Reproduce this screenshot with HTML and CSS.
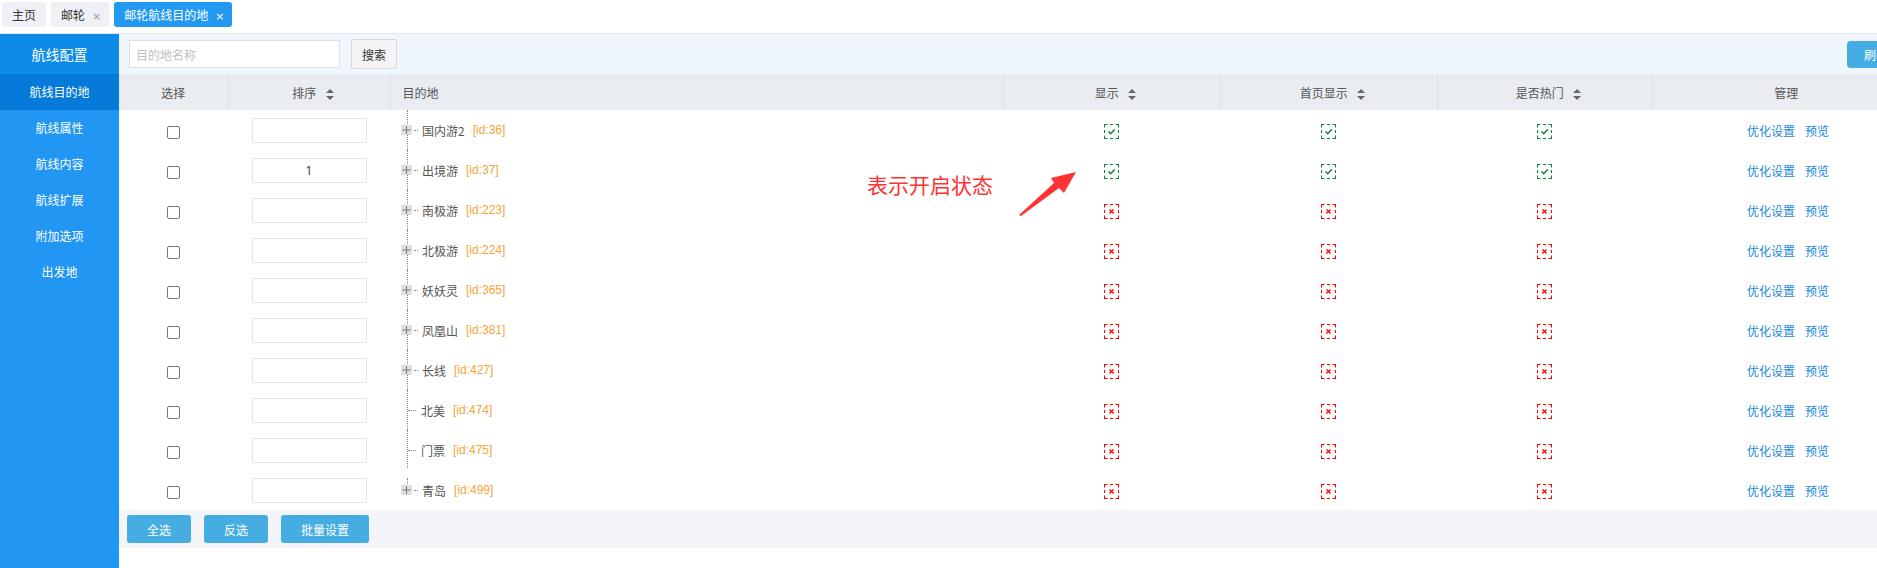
FILE: index.html
```html
<!DOCTYPE html>
<html lang="zh-CN">
<head>
    <meta charset="UTF-8">
    <title>邮轮航线目的地</title>
    <link rel="stylesheet" href="styles.css">
</head>
<body>
    <div class="tabs">
        <div class="tab">主页</div>
        <div class="tab closable">邮轮<span class="close">×</span></div>
        <div class="tab closable active">邮轮航线目的地<span class="close">×</span></div>
    </div>

    <div class="layout">
        <div class="side">
            <div class="side-title">航线配置</div>
            <div class="side-item current">航线目的地</div>
            <div class="side-item">航线属性</div>
            <div class="side-item">航线内容</div>
            <div class="side-item">航线扩展</div>
            <div class="side-item">附加选项</div>
            <div class="side-item">出发地</div>
        </div>

        <div class="main">
            <div class="toolbar">
                <input type="text" class="search-input" placeholder="目的地名称">
                <button class="search-btn">搜索</button>
                <button class="refresh-btn">刷新</button>
            </div>

            <table class="list">
                <colgroup>
                    <col style="width:109px">
                    <col style="width:162px">
                    <col style="width:613px">
                    <col style="width:217px">
                    <col style="width:217px">
                    <col style="width:215px">
                    <col>
                </colgroup>
                <thead>
                    <tr>
                        <th>选择</th>
                        <th>排序 <span class="sort"></span></th>
                        <th class="left">目的地</th>
                        <th>显示 <span class="sort"></span></th>
                        <th>首页显示 <span class="sort"></span></th>
                        <th>是否热门 <span class="sort"></span></th>
                        <th>管理</th>
                    </tr>
                </thead>
                <tbody id="rows"></tbody>
            </table>

            <div class="footer">
                <button class="btn">全选</button>
                <button class="btn">反选</button>
                <button class="btn wide">批量设置</button>
            </div>

            <div class="note">表示开启状态</div>
            <svg class="note-arrow" width="70" height="56" viewBox="0 0 70 56">
                <polygon points="9,50 44,18 41,13 66,7 54,28 49,23 11,51" fill="#f33"/>
            </svg>
        </div>
    </div>

    <script>
        const items = [
            { name: "国内游2", id: 36, sort: "", on: true, type: "folder" },
            { name: "出境游", id: 37, sort: "1", on: true, type: "folder" },
            { name: "南极游", id: 223, sort: "", on: false, type: "folder" },
            { name: "北极游", id: 224, sort: "", on: false, type: "folder" },
            { name: "妖妖灵", id: 365, sort: "", on: false, type: "folder" },
            { name: "凤凰山", id: 381, sort: "", on: false, type: "folder" },
            { name: "长线", id: 427, sort: "", on: false, type: "folder" },
            { name: "北美", id: 474, sort: "", on: false, type: "leaf" },
            { name: "门票", id: 475, sort: "", on: false, type: "leaf end" },
            { name: "青岛", id: 499, sort: "", on: false, type: "folder last" }
        ];

        const box = "M0.5 3.5V0.5H3.5M6 0.5H9M11.5 0.5H14.5V3.5M14.5 6V9M14.5 11.5V14.5H11.5M9 14.5H6M3.5 14.5H0.5V11.5M0.5 9V6";

        function statusIcon(on) {
            const color = on ? "#17803d" : "#f00";
            const mark = on
                ? '<path d="M4.5 7.5L6.7 9.7L10.7 5.5" stroke-width="1.6"/>'
                : '<path d="M5.5 5.5L9.5 9.5M9.5 5.5L5.5 9.5" stroke-width="1.4"/>';
            return `<svg class="status" width="15" height="15" viewBox="0 0 15 15" fill="none" stroke="${color}">
                <path d="${box}" stroke-width="1.2"/>${mark}</svg>`;
        }

        const tbody = document.getElementById("rows");
        items.forEach(item => {
            const tr = document.createElement("tr");
            const isLeaf = item.type.indexOf("leaf") === 0;
            const node = isLeaf
                ? '<span class="dash long"></span>'
                : '<span class="exp"><svg width="11" height="10" viewBox="0 0 11 10"><path d="M1.5 5H9.5M5.5 1V9" stroke="#777" stroke-width="1"/></svg></span><span class="dash"></span>';
            tr.innerHTML = `
                <td><span class="check"></span></td>
                <td><input type="text" class="sort-input" value="${item.sort}"></td>
                <td class="left"><div class="node ${item.type}">${node}<span class="name">${item.name}</span><span class="id">[id:${item.id}]</span></div></td>
                <td>${statusIcon(item.on)}</td>
                <td>${statusIcon(item.on)}</td>
                <td>${statusIcon(item.on)}</td>
                <td class="manage"><a class="link">优化设置</a><a class="link">预览</a></td>`;
            tbody.appendChild(tr);
        });
    </script>
</body>
</html>
```

FILE: styles.css
```css
html, body {
    margin: 0;
    overflow: hidden;
}
body {
    font-family: "Noto Sans CJK SC", "Open Sans", sans-serif;
    font-size: 12px;
    color: #555;
    background: #fff;
}
.tabs {
    display: flex;
    gap: 5px;
    padding: 2px 0 0 2px;
    box-sizing: border-box;
    height: 34px;
    border-bottom: 1px solid #e3e7ec;
}
.tab {
    height: 25px;
    line-height: 25px;
    padding: 0 10px;
    background: #eef0f5;
    border-radius: 3px;
    color: #333;
}
.tab.closable {
    padding-right: 8px;
}
.tab .close {
    margin-left: 7px;
    color: #999;
    font-family: "DejaVu Sans", sans-serif;
    font-size: 11px;
}
.tab.active {
    background: #2399f1;
    color: #fff;
}
.tab.active .close {
    color: #fff;
}
.layout {
    display: flex;
    height: 534px;
}
.side {
    flex: none;
    width: 119px;
    background: #2196f3;
    color: #fff;
}
.side-title {
    height: 40px;
    line-height: 40px;
    text-align: center;
    font-size: 14px;
    background: #0c8be8;
}
.side-item {
    height: 36px;
    line-height: 36px;
    text-align: center;
}
.side-item.current {
    background: #067ad9;
}
.main {
    flex: none;
    width: 1801px;
    position: relative;
}
.toolbar {
    display: flex;
    align-items: center;
    height: 40px;
    padding-left: 10px;
    background: #eff6fd;
}
.search-input {
    width: 211px;
    height: 28px;
    box-sizing: border-box;
    border: 1px solid #dcdfe4;
    padding: 0 6px;
    font-family: inherit;
    font-size: 12px;
}
.search-input::placeholder {
    color: #c0c0c0;
}
.search-btn {
    margin-left: 11px;
    width: 46px;
    height: 30px;
    border: 1px solid #d4d6da;
    background: #f4f4f4;
    font-family: inherit;
    font-size: 12px;
    color: #333;
    border-radius: 2px;
}
.refresh-btn {
    margin-left: auto;
    margin-right: 15px;
    width: 58px;
    height: 27px;
    border: none;
    border-radius: 4px;
    background: #45ade3;
    color: #fff;
    font-family: inherit;
    font-size: 12px;
}
.list {
    width: 100%;
    border-collapse: collapse;
    table-layout: fixed;
}
.list th {
    height: 36px;
    background: #e9ecf1;
    font-weight: normal;
    color: #555;
    border-left: 1px solid #dde1e7;
    padding: 0;
}
.list th:first-child {
    border-left: none;
}
.list td {
    height: 40px;
    padding: 0;
    text-align: center;
}
.list .left {
    text-align: left;
}
.list th.left {
    padding-left: 12px;
}
.list td.left {
    padding-left: 17px;
}
.list td.manage {
    padding-left: 4px;
}
.sort {
    display: inline-block;
    vertical-align: middle;
    margin-left: 7px;
    width: 0;
    height: 11px;
    position: relative;
}
.sort::before, .sort::after {
    content: "";
    position: absolute;
    left: 0;
    border-left: 4px solid transparent;
    border-right: 4px solid transparent;
}
.sort::before {
    top: 0;
    border-bottom: 4px solid #666;
}
.sort::after {
    bottom: 0;
    border-top: 4px solid #666;
}
.check {
    display: inline-block;
    width: 13px;
    height: 13px;
    box-sizing: border-box;
    border: 1px solid #777;
    border-radius: 2px;
    vertical-align: middle;
}
.sort-input {
    width: 115px;
    height: 25px;
    box-sizing: border-box;
    border: 1px solid #e6e6e6;
    text-align: center;
    font-family: "Open Sans", sans-serif;
    font-size: 12px;
    color: #333;
    vertical-align: middle;
}
.node {
    position: relative;
    display: flex;
    align-items: center;
    height: 40px;
}
.node::before {
    content: "";
    position: absolute;
    left: 0;
    top: 0;
    bottom: 0;
    border-left: 1px dotted #888;
}
.node.end::before {
    bottom: 2px;
}
.node.last::before {
    top: 8px;
    bottom: 50%;
}
.exp {
    position: relative;
    margin-left: -6px;
    width: 11px;
    height: 10px;
    background: #dedede;
}
.exp svg {
    display: block;
}
.dash {
    width: 4px;
    margin: 0 4px 0 2px;
    border-top: 1px dotted #888;
}
.dash.long {
    width: 8px;
    margin: 0 5px 0 1px;
}
.name {
    color: #555;
}
.id {
    margin-left: 8px;
    color: #f7a33a;
    font-family: "Liberation Sans", sans-serif;
}
.status {
    vertical-align: middle;
}
.link {
    color: #2088dd;
    margin: 0 5px;
}
.footer {
    display: flex;
    gap: 13px;
    align-items: center;
    height: 38px;
    padding-left: 8px;
    background: #f4f5f8;
}
.btn {
    width: 64px;
    height: 28px;
    border: none;
    border-radius: 3px;
    background: #46ade2;
    color: #fff;
    font-family: inherit;
    font-size: 12px;
}
.btn.wide {
    width: 88px;
}
.note {
    position: absolute;
    left: 748px;
    top: 135px;
    font-size: 21px;
    color: #f33;
}
.note-arrow {
    position: absolute;
    left: 891px;
    top: 131px;
}
```
